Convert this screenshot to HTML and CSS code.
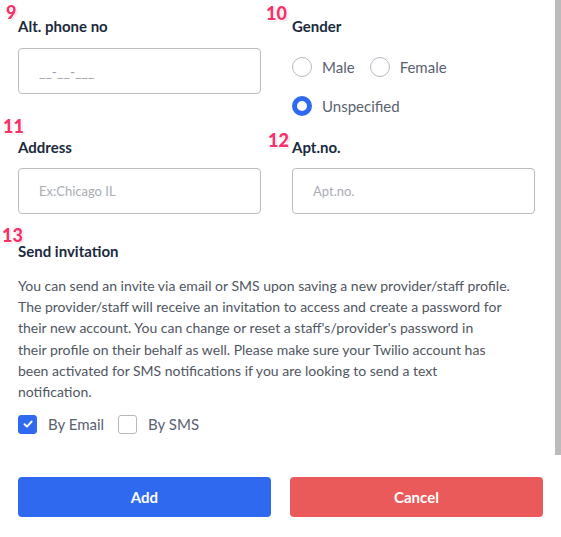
FILE: index.html
```html
<!DOCTYPE html>
<html>
<head>
<meta charset="utf-8">
<link rel="stylesheet" href="styles.css">
</head>
<body>
<div class="page">
  <div class="grid">
    <div class="field">
      <div class="label"><span class="badge b9">9</span>Alt. phone no</div>
      <div class="input"><span class="ph mask">__-__-___</span></div>
    </div>
    <div class="field">
      <div class="label"><span class="badge b10">10</span>Gender</div>
      <div class="radios">
        <label class="radio"><span class="circle"></span>Male</label>
        <label class="radio"><span class="circle"></span>Female</label>
      </div>
      <div class="radios second">
        <label class="radio"><span class="circle on"></span>Unspecified</label>
      </div>
    </div>
    <div class="field row2">
      <div class="label"><span class="badge b11">11</span>Address</div>
      <div class="input"><span class="ph">Ex:Chicago IL</span></div>
    </div>
    <div class="field row2">
      <div class="label"><span class="badge b12">12</span>Apt.no.</div>
      <div class="input"><span class="ph">Apt.no.</span></div>
    </div>
  </div>
  <div class="invite">
    <div class="label"><span class="badge b13">13</span>Send invitation</div>
    <p class="desc">You can send an invite via email or SMS upon saving a new provider/staff profile.<br>The provider/staff will receive an invitation to access and create a password for<br>their new account. You can change or reset a staff's/provider's password in<br>their profile on their behalf as well. Please make sure your Twilio account has<br>been activated for SMS notifications if you are looking to send a text<br>notification.</p>
    <div class="checks">
      <label class="check"><span class="box on"><svg width="12" height="12" viewBox="0 0 12 12"><path d="M2.5 6.2 L5 8.6 L9.6 3.6" fill="none" stroke="#fff" stroke-width="2" stroke-linecap="round" stroke-linejoin="round"/></svg></span>By Email</label>
      <label class="check"><span class="box"></span>By SMS</label>
    </div>
  </div>
  <div class="buttons">
    <button class="btn add">Add</button>
    <button class="btn cancel">Cancel</button>
  </div>
</div>
<div class="scrollbar"></div>
</body>
</html>
```
FILE: styles.css
```css
html, body {
  margin: 0;
  padding: 0;
  background: #fff;
}
body {
  font-family: Lato, "Noto Sans", sans-serif;
  width: 561px;
  height: 537px;
  overflow: hidden;
  position: relative;
}
.page {
  width: 555px;
  box-sizing: border-box;
  padding: 17px 20px 0 18px;
}
.grid {
  display: grid;
  grid-template-columns: 243px 243px;
  column-gap: 31px;
  align-items: start;
}
.field {
  display: flex;
  flex-direction: column;
}
.row2 {
  margin-top: 21px;
}
.label {
  position: relative;
  font-weight: 700;
  font-size: 15px;
  line-height: 18px;
  color: #1b2a3d;
}
.badge {
  position: absolute;
  font-family: Lato, sans-serif;
  font-weight: 900;
  font-size: 18px;
  line-height: 18px;
  color: #f5306a;
  text-shadow: -1px 0 #fff, 1px 0 #fff, 0 -1px #fff, 0 1px #fff, 1px 1px 2px rgba(0,0,0,0.25);
}
.b9 { left: -12px; top: -14px; }
.b10 { left: -26px; top: -13px; }
.b11 { left: -15px; top: -21px; }
.b12 { left: -24px; top: -7px; }
.b13 { left: -16px; top: -16px; }
.input {
  margin-top: 13px;
  height: 46px;
  box-sizing: border-box;
  border: 1px solid #bcbcbc;
  border-radius: 4px;
  display: flex;
  align-items: center;
  padding-left: 20px;
}
.row2 .input {
  margin-top: 12px;
}
.ph {
  font-size: 13px;
  color: #a9adb3;
}
.mask {
  font-size: 14px;
  color: #9a9ea4;
}
.radios {
  display: flex;
  gap: 15px;
  margin-top: 21px;
}
.radios.second {
  margin-top: 17px;
}
.radio {
  display: flex;
  align-items: center;
  font-size: 15px;
  color: #5a6270;
  line-height: 22px;
}
.circle {
  width: 20px;
  height: 20px;
  box-sizing: border-box;
  border: 1px solid #b5bac2;
  border-radius: 50%;
  margin-right: 10px;
}
.circle.on {
  border: 5px solid #2f69ef;
}
.invite {
  margin-top: 28px;
}
.desc {
  margin: 15px 0 0;
  font-size: 14px;
  line-height: 21.2px;
  color: #50565f;
}
.checks {
  display: flex;
  gap: 14px;
  margin-top: 12px;
}
.check {
  display: flex;
  align-items: center;
  font-size: 15px;
  color: #5a6270;
  line-height: 20px;
}
.box {
  width: 19px;
  height: 19px;
  box-sizing: border-box;
  border: 1px solid #b5bac2;
  border-radius: 3px;
  margin-right: 11px;
  display: flex;
  align-items: center;
  justify-content: center;
}
.box.on {
  background: #2f69ef;
  border-color: #2f69ef;
}
.buttons {
  display: flex;
  gap: 19px;
  margin-top: 43px;
  margin-right: -8px;
}
.btn {
  flex: 1;
  height: 40px;
  border: none;
  border-radius: 4px;
  color: #fff;
  font-family: Lato, sans-serif;
  font-weight: 700;
  font-size: 15px;
}
.add { background: #2f69ef; }
.cancel { background: #eb5a5a; }
.scrollbar {
  position: absolute;
  right: 0;
  top: 0;
  width: 6px;
  height: 455px;
  background: #bbbbbb;
}
```
